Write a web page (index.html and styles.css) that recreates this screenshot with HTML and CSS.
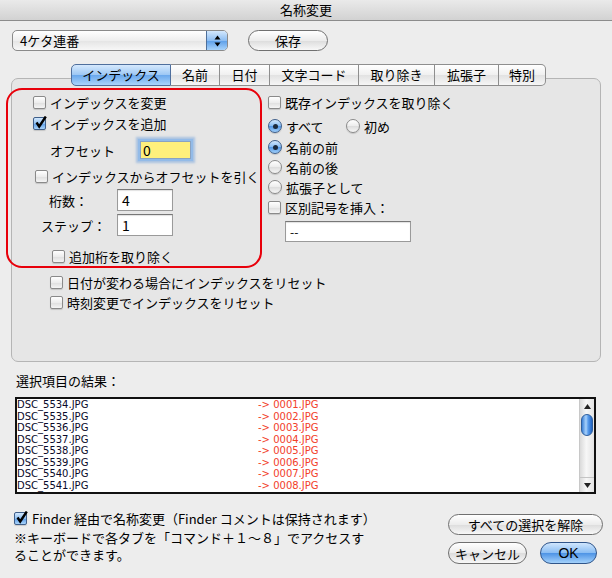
FILE: index.html
```html
<!DOCTYPE html>
<html>
<head>
  <title>名称変更</title>
  <link rel="stylesheet" href="styles.css">
</head>
<body>
<div class="window">
  <div class="titlebar">名称変更</div>

  <div class="toolbar">
    <div class="popup">
      <span class="popup-label">4ケタ連番</span>
      <span class="popup-arrows">
        <svg width="7" height="12" viewBox="0 0 7 12"><path d="M3.5 0.5 L6.5 4.5 L0.5 4.5 Z M0.5 7.5 L6.5 7.5 L3.5 11.5 Z" fill="#000"/></svg>
      </span>
    </div>
    <button class="btn btn-save">保存</button>
  </div>

  <div class="tabs">
    <div class="tab tab-on w-index">インデックス</div>
    <div class="tab w-name">名前</div>
    <div class="tab w-date">日付</div>
    <div class="tab w-code">文字コード</div>
    <div class="tab w-strip">取り除き</div>
    <div class="tab w-ext">拡張子</div>
    <div class="tab w-special">特別</div>
  </div>

  <div class="panel">
    <div class="panel-cols">
      <div class="redbox">
        <div class="row r-change"><span class="cb"></span>インデックスを変更</div>
        <div class="row r-add">
          <span class="cb cb-on"><svg width="13" height="13" viewBox="0 0 13 13"><path d="M2.5 6.5 L5.2 10.5 L11.8 0.5" fill="none" stroke="#000" stroke-width="2.4"/></svg></span>インデックスを追加
        </div>
        <div class="row field-row r-offset">
          <span class="field-label offset-label">オフセット</span>
          <span class="field field-focus">0</span>
        </div>
        <div class="row r-sub"><span class="cb"></span>インデックスからオフセットを引く</div>
        <div class="row field-row r-digits">
          <span class="field-label digits-label">桁数：</span>
          <span class="field">4</span>
        </div>
        <div class="row field-row r-step">
          <span class="field-label step-label">ステップ：</span>
          <span class="field">1</span>
        </div>
        <div class="row r-strip"><span class="cb"></span>追加桁を取り除く</div>
      </div>

      <div class="rightcol">
        <div class="row r1"><span class="cb"></span>既存インデックスを取り除く</div>
        <div class="row r2">
          <span class="radio-pair"><span class="rb rb-on"></span>すべて</span>
          <span class="rb"></span>初め
        </div>
        <div class="row r3"><span class="rb rb-on"></span>名前の前</div>
        <div class="row"><span class="rb"></span>名前の後</div>
        <div class="row"><span class="rb"></span>拡張子として</div>
        <div class="row"><span class="cb"></span>区別記号を挿入：</div>
        <span class="field sep-field">--</span>
      </div>
    </div>

    <div class="resets">
      <div class="row"><span class="cb"></span>日付が変わる場合にインデックスをリセット</div>
      <div class="row"><span class="cb"></span>時刻変更でインデックスをリセット</div>
    </div>
  </div>

  <div class="result-label">選択項目の結果：</div>
  <div class="listbox">
    <div class="rows">
      <div class="item"><span class="src">DSC_5534.JPG</span><span class="dst">-&gt; 0001.JPG</span></div>
      <div class="item"><span class="src">DSC_5535.JPG</span><span class="dst">-&gt; 0002.JPG</span></div>
      <div class="item"><span class="src">DSC_5536.JPG</span><span class="dst">-&gt; 0003.JPG</span></div>
      <div class="item"><span class="src">DSC_5537.JPG</span><span class="dst">-&gt; 0004.JPG</span></div>
      <div class="item"><span class="src">DSC_5538.JPG</span><span class="dst">-&gt; 0005.JPG</span></div>
      <div class="item"><span class="src">DSC_5539.JPG</span><span class="dst">-&gt; 0006.JPG</span></div>
      <div class="item"><span class="src">DSC_5540.JPG</span><span class="dst">-&gt; 0007.JPG</span></div>
      <div class="item"><span class="src">DSC_5541.JPG</span><span class="dst">-&gt; 0008.JPG</span></div>
    </div>
    <div class="scrollbar">
      <div class="sb-arrow sb-up"><svg width="7" height="5" viewBox="0 0 7 5"><path d="M3.5 0 L7 5 L0 5 Z" fill="#222"/></svg></div>
      <div class="sb-thumb"></div>
      <div class="sb-track"></div>
      <div class="sb-arrow sb-down"><svg width="7" height="5" viewBox="0 0 7 5"><path d="M0 0 L7 0 L3.5 5 Z" fill="#222"/></svg></div>
    </div>
  </div>

  <div class="footer">
    <div class="footer-left">
      <div class="row finder-row">
        <span class="cb cb-on"><svg width="13" height="13" viewBox="0 0 13 13"><path d="M2.5 6.5 L5.2 10.5 L11.8 0.5" fill="none" stroke="#000" stroke-width="2.4"/></svg></span>Finder 経由で名称変更（Finder コメントは保持されます）
      </div>
      <p class="note">※キーボードで各タブを「コマンド＋１～８」でアクセスす</p>
      <p class="note">ることができます。</p>
    </div>
    <div class="footer-right">
      <button class="btn btn-clear">すべての選択を解除</button>
      <div class="btn-pair">
        <button class="btn btn-cancel">キャンセル</button>
        <button class="btn btn-ok">OK</button>
      </div>
    </div>
  </div>
</div>
</body>
</html>
```

FILE: styles.css
```css
* {
  box-sizing: border-box;
}
body {
  margin: 0;
  background: #ededed;
  font-family: "Noto Sans CJK JP", sans-serif;
  font-size: 13px;
  color: #000;
}
.window {
  width: 612px;
  height: 578px;
  background: #ededed;
}

/* title bar */
.titlebar {
  height: 21px;
  line-height: 20px;
  text-align: center;
  background: linear-gradient(#eaeaea, #d2d2d2);
  border-bottom: 1px solid #8c8c8c;
}

/* popup + save */
.toolbar {
  display: flex;
  align-items: center;
  padding: 9px 0 0 12px;
  gap: 20px;
}
.popup {
  width: 216px;
  height: 21px;
  display: flex;
  border: 1px solid #8a8a8a;
  border-radius: 5px;
  background: linear-gradient(#ffffff, #eeeeee 50%, #e4e4e4 51%, #f7f7f7);
  overflow: hidden;
}
.popup-label {
  flex: 1;
  padding-left: 7px;
  line-height: 19px;
}
.popup-arrows {
  width: 21px;
  display: flex;
  align-items: center;
  justify-content: center;
  border-left: 1px solid #4e6f9a;
  background: linear-gradient(#d4e8fd, #8cbdf2 50%, #5c9ee8 51%, #a8d3fb);
}
.btn {
  height: 21px;
  padding: 0;
  border: 1px solid #707070;
  border-radius: 11px;
  background: linear-gradient(#ffffff, #ececec 50%, #dcdcdc 51%, #f8f8f8);
  font: inherit;
  line-height: 19px;
  text-align: center;
  color: #000;
}
.btn-save {
  width: 80px;
}

/* tabs */
.tabs {
  display: flex;
  height: 22px;
  margin: 13px 0 0 71px;
  position: relative;
  z-index: 1;
}
.tab {
  height: 22px;
  line-height: 20px;
  text-align: center;
  border: 1px solid #8e8e8e;
  border-left: none;
  background: linear-gradient(#ffffff, #f0f0f0 50%, #e2e2e2 51%, #f6f6f6);
}
.tab:first-child {
  border-left: 1px solid #4f6f9d;
  border-radius: 5px 0 0 5px;
}
.tab:last-child {
  border-radius: 0 5px 5px 0;
}
.tab-on {
  border-color: #4f6f9d;
  background: linear-gradient(#d6e9fd, #9cc7f4 50%, #6aa8ec 51%, #aad4fb);
}
.w-index { width: 100px; }
.w-name { width: 49px; }
.w-date { width: 50px; }
.w-code { width: 89px; }
.w-strip { width: 76px; }
.w-ext { width: 64px; }
.w-special { width: 47px; }

/* tab panel */
.panel {
  height: 284px;
  margin: -8px 11px 0 11px;
  border: 1px solid #b5b5b5;
  border-radius: 7px;
  background: #e6e6e6;
}
.panel-cols {
  display: flex;
  align-items: flex-start;
  margin-top: 9px;
}
.redbox {
  width: 256px;
  height: 180px;
  margin-left: -6px;
  border: 2px solid #e8000b;
  border-radius: 16px;
}
.rightcol {
  margin-left: 6px;
}

.row {
  display: flex;
  align-items: center;
  height: 20px;
  white-space: nowrap;
}
.field-row {
  height: 22px;
}

/* checkbox & radio */
.cb {
  width: 13px;
  height: 13px;
  margin-right: 4px;
  flex: none;
  border: 1px solid #8a8a8a;
  border-radius: 2px;
  background: linear-gradient(#ffffff, #ededed 50%, #dedede 51%, #f5f5f5);
  box-shadow: 0 1px 1px rgba(0, 0, 0, 0.15);
  position: relative;
}
.cb-on {
  border-color: #3f5f8a;
  background: linear-gradient(#d3e8fd, #8fc0f3 50%, #5b9ce7 51%, #a9d4fb);
}
.cb svg {
  position: absolute;
  left: 0;
  top: -2px;
}
.rb {
  width: 14px;
  height: 14px;
  margin-right: 4px;
  flex: none;
  border: 1px solid #8a8a8a;
  border-radius: 50%;
  background: linear-gradient(#ffffff, #ececec 50%, #dcdcdc 51%, #f6f6f6);
  box-shadow: 0 1px 1px rgba(0, 0, 0, 0.15);
  display: flex;
  align-items: center;
  justify-content: center;
}
.rb-on {
  border-color: #3f5f8a;
  background: linear-gradient(#d3e8fd, #86bbf2 50%, #4f94e4 51%, #a2d0fa);
}
.rb-on::after {
  content: "";
  width: 5px;
  height: 5px;
  border-radius: 50%;
  background: #1b2a3d;
}
.radio-pair {
  display: flex;
  align-items: center;
  width: 78px;
}

/* text fields */
.field {
  display: inline-block;
  width: 56px;
  height: 22px;
  padding-left: 4px;
  border: 1px solid #9a9a9a;
  border-top-color: #777;
  background: #fff;
  line-height: 20px;
  font-size: 14px;
  box-shadow: inset 0 1px 1px rgba(0, 0, 0, 0.12);
}
.field-focus {
  width: 51px;
  height: 18px;
  line-height: 17px;
  padding-left: 2px;
  border: 1px solid #8aa3c2;
  background: #fff07c;
  box-shadow: 0 0 0 2px #93bbe8, 0 0 2px 4px rgba(120, 165, 220, 0.55);
}
.field-label {
  display: inline-block;
}

/* rows in red box */
.r-change { margin-top: 2px; padding-left: 25px; }
.r-add { margin-top: 1px; padding-left: 25px; }
.r-offset { margin-top: 6px; padding-left: 42px; }
.offset-label { width: 90px; }
.r-sub { margin-top: 5px; padding-left: 27px; }
.r-digits { margin-top: 3px; padding-left: 41px; }
.digits-label { width: 68px; }
.r-step { margin-top: 3px; padding-left: 33px; }
.step-label { width: 76px; }
.r-strip { margin-top: 10px; padding-left: 44px; }

/* rows in right column */
.rightcol .r1 { margin-top: 4px; }
.rightcol .r2 { margin-top: 4px; }
.rightcol .r3 { margin-top: 1px; }
.sep-field {
  width: 126px;
  height: 21px;
  margin: 4px 0 0 17px;
  font-size: 12px;
}

.resets {
  margin-top: 4px;
  padding-left: 38px;
}

/* results list */
.result-label {
  margin: 10px 0 0 16px;
  line-height: 18px;
}
.listbox {
  display: flex;
  width: 581px;
  height: 97px;
  margin: 7px 0 0 15px;
  border: 2px solid #111;
  background: #fff;
}
.rows {
  flex: 1;
  overflow: hidden;
  font-family: "DejaVu Sans", sans-serif;
  font-size: 10px;
  line-height: 11.5px;
}
.item {
  display: flex;
}
.src {
  width: 241px;
  color: #0a0a2a;
}
.dst {
  color: #f2402a;
}
.scrollbar {
  width: 15px;
  display: flex;
  flex-direction: column;
  border-left: 1px solid #c8c8c8;
  background: linear-gradient(90deg, #dadada, #f7f7f7 45%, #e3e3e3);
}
.sb-arrow {
  height: 15px;
  display: flex;
  align-items: center;
  justify-content: center;
}
.sb-thumb {
  height: 22px;
  margin: 0 1px;
  border: 1px solid #2f5f9d;
  border-radius: 6px;
  background: linear-gradient(90deg, #3a7fd6, #a9d2fb 40%, #5a9ded 60%, #1f63c2);
}
.sb-track {
  flex: 1;
}
.sb-down {
  border-top: 1px solid #c4c4c4;
}

/* footer */
.footer {
  display: flex;
  justify-content: space-between;
  margin-top: 15px;
  padding: 0 9px 0 14px;
}
.finder-row {
  height: 18px;
  font-size: 13px;
}
.finder-row .cb {
  margin-right: 5px;
}
.note {
  margin: 0;
  font-size: 13px;
  line-height: 17px;
  height: 17px;
}
.finder-row + .note {
  margin-top: 2px;
}
.footer-right {
  margin-top: 5px;
  width: 155px;
}
.btn-clear {
  width: 155px;
}
.btn-pair {
  display: flex;
  justify-content: space-between;
  margin-top: 7px;
  padding-right: 6px;
}
.btn-cancel {
  width: 79px;
  height: 22px;
}
.btn-ok {
  width: 57px;
  height: 22px;
  border-color: #30558a;
  background: linear-gradient(#d0e6fd, #88bcf3 50%, #4d93e5 51%, #a3d1fb);
  font-family: "Liberation Sans", sans-serif;
  font-size: 14px;
}
```
